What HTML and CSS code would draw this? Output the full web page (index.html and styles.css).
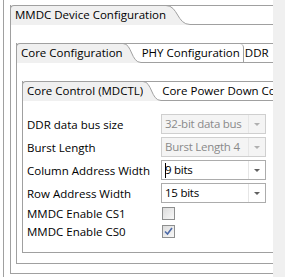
FILE: index.html
```html
<!DOCTYPE html>
<html lang="en">
<head>
  <meta charset="UTF-8">
  <title>MMDC Device Configuration</title>
  <link rel="stylesheet" href="styles.css">
</head>
<body>
  <div class="page">
    <div class="pane">
      <div class="frame">
        <div class="folder f1">
          <div class="tabbar">
            <div class="tab active">MMDC Device Configuration</div>
            <svg class="curve" width="24" height="20" viewBox="0 0 24 20">
              <path d="M0,0.5 C12,0.5 11,19.5 24,19.5 L24,20 L0,20 Z" fill="#f0f0f0"/>
              <path d="M0,0.5 L24,0.5" stroke="#a0a0a0" fill="none"/>
              <path d="M0,0.5 C12,0.5 11,19.5 24,19.5" stroke="#a0a0a0" fill="none"/>
            </svg>
            <div class="tabrest"></div>
          </div>
          <div class="body">
            <div class="folder f2">
              <div class="tabbar">
                <div class="tab active">Core Configuration</div>
                <svg class="curve" width="18" height="20" viewBox="0 0 18 20">
                  <path d="M0,0.5 C9,0.5 8,19.5 18,19.5 L18,20 L0,20 Z" fill="#f0f0f0"/>
                  <path d="M0,0.5 L18,0.5" stroke="#a0a0a0" fill="none"/>
                  <path d="M0,0.5 C9,0.5 8,19.5 18,19.5" stroke="#a0a0a0" fill="none"/>
                </svg>
                <div class="tabrest">
                  <span class="tab other sep">PHY Configuration</span>
                  <span class="tab other">DDR</span>
                </div>
              </div>
              <div class="body">
                <div class="folder f3">
                  <div class="tabbar">
                    <div class="tab active">Core Control (MDCTL)</div>
                    <svg class="curve" width="18" height="20" viewBox="0 0 18 20">
                      <path d="M0,0.5 C9,0.5 8,19.5 18,19.5 L18,20 L0,20 Z" fill="#f0f0f0"/>
                      <path d="M0,0.5 L18,0.5" stroke="#a0a0a0" fill="none"/>
                      <path d="M0,0.5 C9,0.5 8,19.5 18,19.5" stroke="#a0a0a0" fill="none"/>
                    </svg>
                    <div class="tabrest">
                      <span class="tab other">Core Power Down Control</span>
                    </div>
                  </div>
                  <div class="body form">
                    <label>DDR data bus size</label>
                    <div class="combo disabled"><span class="value">32-bit data bus</span><span class="arrow"></span></div>

                    <label>Burst Length</label>
                    <div class="combo disabled"><span class="value">Burst Length 4</span><span class="arrow"></span></div>

                    <label>Column Address Width</label>
                    <div class="combo"><span class="value"><span class="caret"></span>9 bits</span><span class="arrow"></span></div>

                    <label>Row Address Width</label>
                    <div class="combo"><span class="value">15 bits</span><span class="arrow"></span></div>

                    <label>MMDC Enable CS1</label>
                    <div class="check-cell"><span class="checkbox"></span></div>

                    <label>MMDC Enable CS0</label>
                    <div class="check-cell">
                      <span class="checkbox checked">
                        <svg width="11" height="11" viewBox="0 0 11 11">
                          <path d="M2,5.5 L4.5,8 L9,2" stroke="#4d6aa8" stroke-width="1.6" fill="none"/>
                        </svg>
                      </span>
                    </div>
                  </div>
                </div>
              </div>
            </div>
          </div>
        </div>
      </div>
    </div>
    <div class="strip"></div>
  </div>
</body>
</html>
```

FILE: styles.css
```css
:root {
  --line: #a0a0a0;
  --tab-bg: #f0f0f0;
  --text: #000000;
}

* {
  box-sizing: border-box;
  margin: 0;
  padding: 0;
}

body {
  font-family: 'Open Sans', 'Noto Sans', sans-serif;
  font-size: 11.5px;
  color: var(--text);
  background: #ffffff;
}

.page {
  display: flex;
  height: 277px;
}

.pane {
  width: 273px;
  overflow: hidden;
  background: #ffffff;
}

.strip {
  flex: 1;
  background: #f0f0f0;
}

.frame {
  margin-left: 3px;
  border-left: 1px solid var(--line);
  padding-left: 6px;
  padding-top: 5px;
  height: 100%;
}

.folder {
  width: 330px;
  border-left: 1px solid var(--line);
  border-bottom: 1px solid var(--line);
}

.tabbar {
  display: flex;
  height: 20px;
  margin-left: -1px;
}

.tab.active {
  background: var(--tab-bg);
  border-top: 1px solid var(--line);
  border-left: 1px solid var(--line);
  border-top-left-radius: 4px;
  padding-left: 4px;
  line-height: 18px;
  white-space: nowrap;
}

.curve {
  flex: none;
  display: block;
}

.tabrest {
  flex: 1;
  display: flex;
  border-top: 1px solid var(--line);
  border-bottom: 1px solid var(--line);
  white-space: nowrap;
  overflow: hidden;
}

.tab.other {
  line-height: 18px;
  padding: 0 2px 0 1px;
}

.tab.sep {
  border-right: 1px solid var(--line);
  border-top-right-radius: 4px;
  padding-right: 3px;
}

.f1 > .body {
  padding: 18px 0 9px 5px;
}

.f2 > .body {
  padding: 18px 0 10px 5px;
}

.form {
  display: grid;
  grid-template-columns: 134px 105px;
  grid-template-rows: repeat(4, 20px) 15px 15px;
  row-gap: 3px;
  align-items: center;
  padding: 13px 0 13px 4px;
}

.form label {
  white-space: nowrap;
}

.combo {
  display: flex;
  height: 20px;
  border: 1px solid #acacac;
  background: #ffffff;
}

.combo .value {
  flex: 1;
  padding-left: 3px;
  line-height: 18px;
  position: relative;
  white-space: nowrap;
  letter-spacing: -0.25px;
}

.caret {
  position: absolute;
  left: 3px;
  top: 2px;
  height: 15px;
  border-left: 1px solid #000;
}

.combo .arrow {
  width: 17px;
  border-left: 1px solid #e6e6e6;
  position: relative;
}

.combo .arrow::after {
  content: '';
  position: absolute;
  left: 5px;
  top: 8px;
  border-left: 3px solid transparent;
  border-right: 3px solid transparent;
  border-top: 3px solid #606060;
}

.combo.disabled {
  border-color: #cfcfcf;
  background: #f4f4f4;
  color: #8a8a8a;
}

.combo.disabled .arrow::after {
  border-top-color: #b0b0b0;
}

.check-cell {
  display: flex;
  align-items: center;
}

.checkbox {
  display: block;
  width: 13px;
  height: 13px;
  border: 1px solid #8e8f8f;
  background: linear-gradient(135deg, #dcdcdc, #f8f8f8);
  margin-left: 1px;
}

.checkbox svg {
  display: block;
}
```
